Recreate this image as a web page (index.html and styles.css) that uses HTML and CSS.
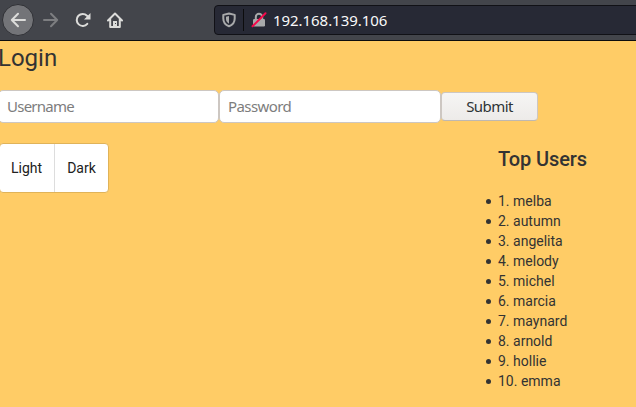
FILE: index.html
```html
<!DOCTYPE html>
<html lang="en">
<head>
<meta charset="utf-8">
<title>Login</title>
<link rel="stylesheet" href="styles.css">
</head>
<body>
<header class="toolbar">
  <button class="nav back" aria-label="Back"><svg width="16" height="16" viewBox="0 0 16 16"><path d="M15 8H1.800M8 1.800L1.800 8L8 14.200"/></svg></button>
  <button class="nav forward" aria-label="Forward"><svg width="16" height="16" viewBox="0 0 16 16"><path d="M1 8h13.200M8 1.800L14.200 8L8 14.200"/></svg></button>
  <button class="nav reload" aria-label="Reload"><svg width="16" height="16" viewBox="0 0 16 16"><path d="M12.300 11.800A6 6 0 1 1 12 3.700L14 6"/><path class="solid" d="M15.500 1v6.500H9z"/></svg></button>
  <button class="nav home" aria-label="Home"><svg width="16" height="16" viewBox="0 0 16 16"><path d="M1 8.500L8 1.500L15 8.500M3.200 7.500V15h9.600V7.500"/><path class="solid" d="M6 9h4v6H6z"/><path class="hole" d="M8 11h1v1H8z"/></svg></button>
  <div class="address">
    <svg class="shield" width="14" height="16" viewBox="0 0 14 16"><path d="M7 1.500L12.700 2.900V6.500C12.700 10.500 10.500 13 7 14.300C3.500 13 1.300 10.500 1.300 6.500V2.900Z"/><path class="solid" d="M7 4L4 4.700V7c0 2 1.200 3.700 3 4.700z"/></svg>
    <span class="divider"></span>
    <svg class="lock" width="16" height="16" viewBox="0 0 16 16"><path class="shackle" d="M4.800 7V5a3.200 3.200 0 0 1 6.400 0v2"/><rect x="2" y="7" width="12" height="7.500" rx="1.200"/><path class="slash" d="M1.500 14.300L14.500 1.300"/></svg>
    <span class="url">192.168.139.106</span>
  </div>
</header>
<main>
  <h1>Login</h1>
  <form class="login">
    <input class="field" type="text" placeholder="Username">
    <input class="field" type="password" placeholder="Password">
    <button class="submit" type="button">Submit</button>
  </form>
  <div class="lower">
    <div class="theme"><button type="button">Light</button><button type="button">Dark</button></div>
    <section class="users">
      <h2>Top Users</h2>
      <ul>
        <li>1. melba</li>
        <li>2. autumn</li>
        <li>3. angelita</li>
        <li>4. melody</li>
        <li>5. michel</li>
        <li>6. marcia</li>
        <li>7. maynard</li>
        <li>8. arnold</li>
        <li>9. hollie</li>
        <li>10. emma</li>
      </ul>
    </section>
  </div>
</main>
</body>
</html>
```
FILE: styles.css
```css
* { box-sizing: border-box; }
body {
  margin: 0;
  height: 407px;
  overflow: hidden;
  background: #ffcc66;
  color: #333;
  font: 14px/20px Roboto, sans-serif;
}
button, input { margin: 0; font-family: inherit; }
.toolbar {
  display: flex;
  align-items: center;
  height: 41px;
  background: #43454b;
  border-bottom: 1px solid #0c0c0d;
}
.nav {
  display: flex;
  align-items: center;
  justify-content: center;
  flex: none;
  width: 32px;
  height: 32px;
  padding: 0;
  border: 0;
  background: none;
}
.nav path { fill: none; stroke: #dcdcda; stroke-width: 2; stroke-linecap: round; stroke-linejoin: round; }
.nav .solid { fill: #dcdcda; stroke: none; }
.nav .hole { fill: #43454b; stroke: none; }
.back { margin-left: 2px; border: 1px solid #303136; border-radius: 50%; background: #737478; }
.forward { margin-left: 1px; }
.forward path { stroke: #7d7e81; }
.address {
  display: flex;
  align-items: center;
  width: 440px;
  height: 30px;
  margin-left: 83px;
  flex: none;
  padding-left: 7px;
  border: 1px solid #111116;
  border-radius: 4px;
  background: #272935;
}
.shield path { fill: none; stroke: #a8a9aa; stroke-width: 2; stroke-linejoin: round; }
.shield .solid { fill: #a8a9aa; stroke: none; }
.divider { width: 1px; height: 22px; margin: 0 7px; background: #0c0c0d; }
.lock rect { fill: #a8a9aa; }
.lock path { fill: none; stroke-width: 2; }
.lock .shackle { stroke: #a8a9aa; }
.lock .slash { stroke: #f5084a; stroke-linecap: round; }
.url { margin-left: 6px; color: #f9f9fa; font: 15px/20px "Noto Sans", sans-serif; letter-spacing: -0.05px; }
h1 { margin: 0 0 0 -2px; padding-top: 1px; font-size: 24px; line-height: 32px; font-weight: 400; }
.login { display: flex; align-items: center; height: 33px; margin-top: 16px; }
.field {
  width: 221px;
  height: 33px;
  padding: 0 8px 2px;
  border: 1px solid #cdc7c2;
  border-radius: 5px;
  background: #fff;
  font: 15px/20px "Noto Sans", sans-serif;
  letter-spacing: -0.75px;
}
.field:first-child { margin-left: -2px; }
.field + .field { width: 222px; letter-spacing: -0.6px; }
.field::placeholder { color: #7d7d7d; opacity: 1; }
.submit {
  width: 97px;
  height: 29px;
  padding: 0 0 2px;
  border: 1px solid #cdc7c2;
  border-bottom-color: #bfb8b1;
  border-radius: 4px;
  background: linear-gradient(#f6f5f4, #edebe9);
  color: #2e3436;
  font: 15px/20px "Noto Sans", sans-serif;
  letter-spacing: -0.55px;
}
.lower { display: flex; align-items: flex-start; justify-content: space-between; padding-top: 20px; }
.theme {
  display: flex;
  height: 50px;
  margin-left: -1px;
  border: 1px solid #e0b359;
  border-radius: 4px;
  background: #fff;
}
.theme button { width: 54px; padding: 0; border: 0; background: none; color: #212121; font-size: 14px; }
.theme button:first-child { padding-right: 1px; }
.theme button + button { border-left: 1px solid #ddd; }
.users { width: 138px; }
h2 { margin: 0; font-size: 20px; line-height: 32px; font-weight: 500; letter-spacing: -0.1px; }
ul { margin: 16px 0 0 -12px; padding: 0; list-style: none; }
li { display: flex; align-items: flex-start; }
li::before { content: ""; flex: none; width: 5px; height: 5px; margin: 8px 7px 0 0; border-radius: 50%; background: #333; }
```
